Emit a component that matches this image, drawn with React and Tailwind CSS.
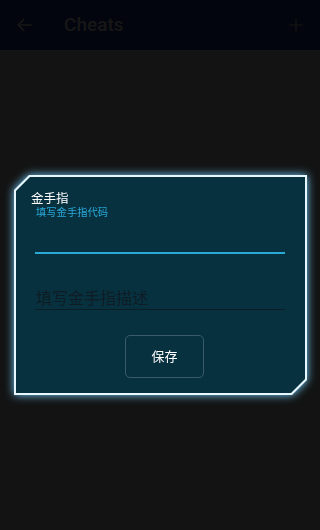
import React from 'react';

const frame =
  '[clip-path:polygon(15px_0,100%_0,100%_calc(100%_-_15px),calc(100%_-_15px)_100%,0_100%,0_15px)]';
const frameInner =
  '[clip-path:polygon(14px_0,100%_0,100%_calc(100%_-_14px),calc(100%_-_14px)_100%,0_100%,0_14px)]';

const App = () => {
  return (
    <div
      className="flex h-[530px] w-full flex-col bg-[#131313]"
      style={{ fontFamily: "Roboto, 'Noto Sans CJK SC', sans-serif" }}
    >
      <div className="flex h-[50px] items-center bg-[#02050d] px-[15px]">
        <svg width="20" height="20" viewBox="0 0 24 24" fill="none" stroke="#171717" strokeWidth="2">
          <path d="M20 12H4M11 5l-7 7 7 7" />
        </svg>
        <span className="ml-[29px] text-[19px] font-medium text-[#171717]">Cheats</span>
        <div className="flex-1" />
        <svg width="18" height="18" viewBox="0 0 24 24" fill="none" stroke="#121212" strokeWidth="2">
          <path d="M12 3v18M3 12h18" />
        </svg>
      </div>

      <div className="px-[14px] pt-[125px]">
        <div className="w-[293px] drop-shadow-[0_0_5px_#6fcfff]">
          <div className={`bg-[#e6f7ff] p-[2px] ${frame}`}>
            <div className={`flex h-[216px] flex-col bg-[#08313f] ${frameInner}`}>
              <div className="ml-[15px] mt-[14px] text-[12.5px] leading-[15px] text-white">金手指</div>
              <div className="ml-[20px] text-[10.3px] leading-[13px] text-[#2aa8d8]">填写金手指代码</div>
              <div className="ml-[19px] mt-[33px] h-[2px] w-[250px] bg-[#2aa8d8]" />
              <div className="ml-[19px] mt-[35px] w-[250px] border-b border-[#0b1d25] pl-px text-[16px] leading-[20px] text-[#0e1d25]">
                填写金手指描述
              </div>
              <div className="mt-[25px] flex justify-center pl-[8px]">
                <div className="flex h-[43px] w-[79px] items-center justify-center rounded-[5px] border border-[#3a5c69] text-[13px] text-white">
                  保存
                </div>
              </div>
            </div>
          </div>
        </div>
      </div>
    </div>
  );
};

export default App;
